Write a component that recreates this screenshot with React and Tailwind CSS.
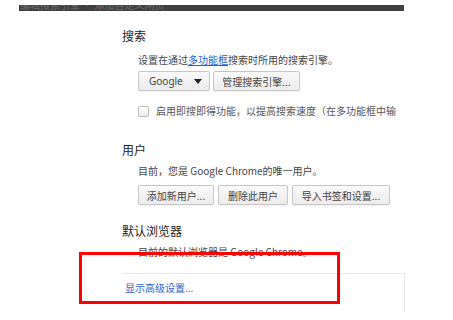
import React from 'react';

const btnBase =
  'h-[20px] flex items-center rounded-[2px] border border-[#c6c6c6] bg-gradient-to-b from-[#fafafa] to-[#ebebeb] text-[10px] text-[#444] shadow-[0_1px_0_rgba(0,0,0,0.05)]';

const Btn = ({ className = '', children }) => (
  <div className={`${btnBase} justify-center ${className}`}>{children}</div>
);

export default function App() {
  return (
    <div className="relative w-[453px] h-[320px] overflow-hidden bg-white font-['Noto_Sans_CJK_SC','Noto_Sans',sans-serif] text-[#333]">
      {/* cropped header bar */}
      <div className="pt-[5px] pl-[19px]">
        <div className="w-[385px] h-[6px] bg-[#3f3f3f] overflow-hidden">
          <div className="-mt-[6px] pl-[1px] text-[10px] leading-[12px] text-[#6e6e6e] whitespace-nowrap">
            编辑搜索引擎 · 添加自定义网页
          </div>
        </div>
      </div>

      <div className="pl-[122px]">
        {/* search */}
        <div className="mt-[18px] text-[12px] leading-[14px] text-[#222]">搜索</div>
        <div className="pl-[16px]">
          <div className="mt-[10px] text-[10px] leading-[14px] text-[#444] whitespace-nowrap">
            设置在通过<span className="text-[#1a5fd6] underline">多功能框</span>搜索时所用的搜索引擎。
          </div>
          <div className="mt-[4px] flex gap-[3px]">
            <div className={`${btnBase} w-[72px] justify-between pl-[10px] pr-[7px]`}>
              <span className="font-['Noto_Sans',sans-serif]">Google</span>
              <svg width="8" height="5" viewBox="0 0 8 5">
                <path d="M0 0h8L4 5z" fill="#222" />
              </svg>
            </div>
            <Btn className="w-[87px]">管理搜索引擎...</Btn>
          </div>
          <div className="mt-[13px] flex items-center gap-[7px] text-[10px] leading-[14px] text-[#555] whitespace-nowrap w-[266px] overflow-hidden">
            <div className="w-[11px] h-[11px] shrink-0 rounded-[2px] border border-[#bbb] bg-gradient-to-b from-[#fdfdfd] to-[#ececec]" />
            <span>启用即搜即得功能，以提高搜索速度（在多功能框中输</span>
          </div>
        </div>

        {/* users */}
        <div className="mt-[25px] text-[12px] leading-[14px] text-[#222]">用户</div>
        <div className="pl-[16px]">
          <div className="mt-[7px] text-[10px] leading-[14px] text-[#444] whitespace-nowrap">
            目前，您是 Google Chrome的唯一用户。
          </div>
          <div className="mt-[7px] flex gap-[4px]">
            <Btn className="w-[76px]">添加新用户...</Btn>
            <Btn className="w-[70px]">删除此用户</Btn>
            <Btn className="w-[98px]">导入书签和设置...</Btn>
          </div>
        </div>

        {/* default browser */}
        <div className="mt-[19px] text-[12px] leading-[14px] text-[#222]">默认浏览器</div>
        <div className="pl-[16px] mt-[7px] text-[10px] leading-[14px] text-[#444] whitespace-nowrap">
          目前的默认浏览器是 Google Chrome。
        </div>

        <div className="mt-[14px] w-[283px] h-[40px] border-t border-r border-[#e8e8e8] pl-[3px] pt-[7px]">
          <div className="text-[10px] leading-[14px] text-[#2a62d0]">显示高级设置...</div>
        </div>
      </div>

      {/* red highlight */}
      <div className="absolute left-[79px] top-[252px] w-[261px] h-[52px] border-[3px] border-[#ff0000]" />
    </div>
  );
}
